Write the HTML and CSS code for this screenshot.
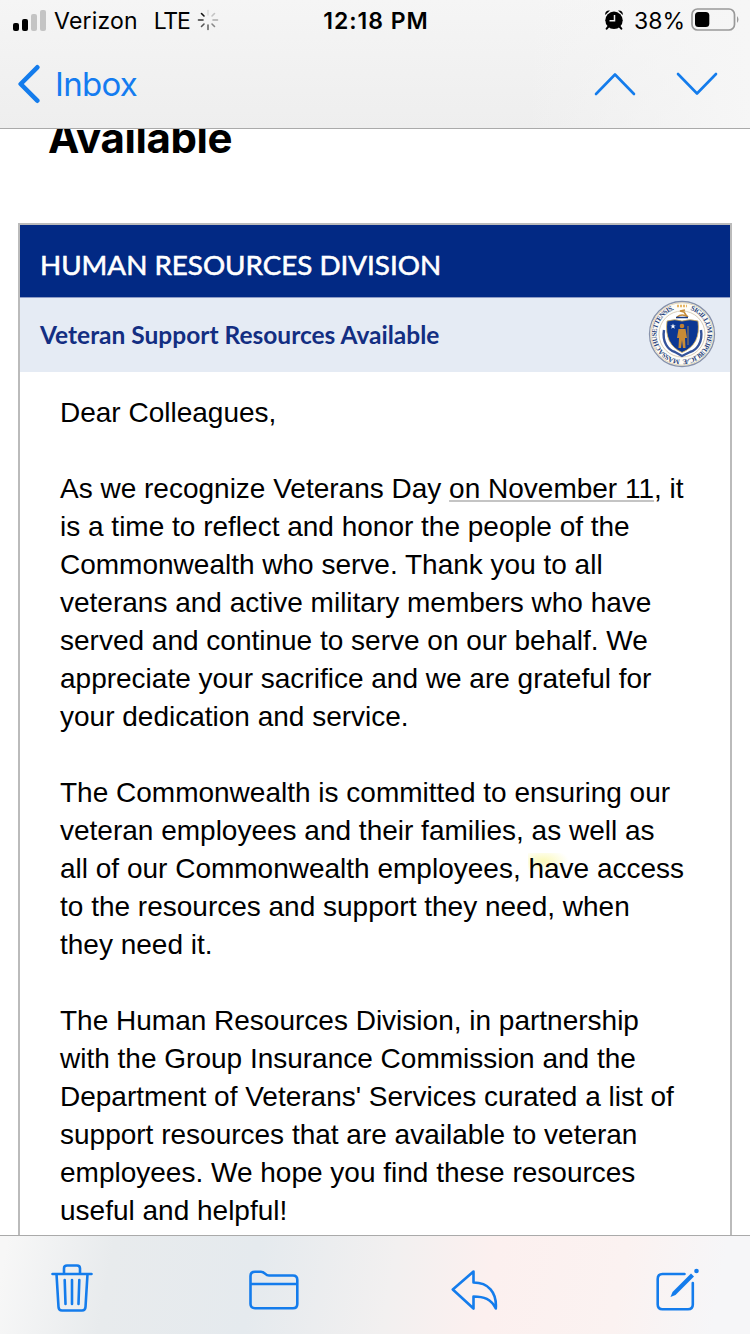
FILE: index.html
```html
<!DOCTYPE html>
<html lang="en">
<head>
<meta charset="utf-8">
<title>Mail</title>
<link rel="stylesheet" href="styles.css">
</head>
<body>
<div class="app">
  <header class="top">
    <div class="status">
      <div class="status-left">
        <svg class="signal" width="34" height="22" viewBox="0 0 34 22">
          <rect x="0" y="14" width="6" height="8" rx="2"/>
          <rect x="9" y="10" width="6" height="12" rx="2"/>
          <rect class="weak" x="18" y="5" width="6" height="17" rx="2"/>
          <rect class="weak" x="27" y="1" width="6" height="21" rx="2"/>
        </svg>
        <span class="carrier">Verizon</span>
        <span class="network">LTE</span>
        <svg class="spinner" width="22" height="22" viewBox="-11 -11 22 22">
          <path d="M-4-4L-6.5-6.5" stroke="#111"/>
          <path d="M-5 0H-9.500" stroke="#333"/>
          <path d="M-4 4L-6.500 6.500" stroke="#555"/>
          <path d="M0 5V9.500" stroke="#666"/>
          <path d="M4 4L6.500 6.500" stroke="#888"/>
          <path d="M5 0H9.500" stroke="#aaa"/>
          <path d="M4-4L6.500-6.500" stroke="#c4c4c4"/>
          <path d="M0-5V-9.500" stroke="#ddd"/>
        </svg>
      </div>
      <div class="clock">12:18 PM</div>
      <div class="status-right">
        <svg class="alarm" width="18" height="20" viewBox="0 0 18 20">
          <circle cx="9" cy="10.300" r="8.700"/>
          <path d="M.2 5C-.2 2 2 0 5 .6ZM17.800 5C18.200 2 16 0 13 .6Z"/>
          <path class="legs" d="M3.500 16.500L1.700 18.700M14.500 16.500L16.300 18.700"/>
          <path class="hands" d="M9.500 5V10.700H4.500"/>
        </svg>
        <span class="percent">38%</span>
        <svg class="battery" width="49" height="24" viewBox="0 0 49 24">
          <rect class="case" x="1" y="1" width="42.500" height="21" rx="5.500"/>
          <rect x="4" y="4" width="14.300" height="15" rx="3.500"/>
          <path class="tip" d="M46 8Q49 11.500 46 15Z"/>
        </svg>
      </div>
    </div>
    <nav class="navbar">
      <a class="back">
        <svg class="icon" width="24" height="40" viewBox="0 0 24 40"><path class="bold" d="M21.300 3.300L4.700 20 21.300 36.700"/></svg>
        <span>Inbox</span>
      </a>
      <div class="arrows">
        <svg class="icon" width="42" height="24" viewBox="0 0 42 24"><path d="M2 22L21 2.500 40 22"/></svg>
        <svg class="icon" width="42" height="24" viewBox="0 0 42 24"><path d="M2 2L21 21.500 40 2"/></svg>
      </div>
    </nav>
  </header>

  <main class="message">
    <h1 class="subject">Available</h1>
    <article class="letter">
      <div class="division">HUMAN RESOURCES DIVISION</div>
      <div class="topic">
        <span>Veteran Support Resources Available</span>
        <svg class="seal" width="68" height="68" viewBox="-34 -34 68 68">
          <defs><path id="ring" d="M0 25.500A25.500 25.500 0 1 1 .01 25.500"/></defs>
          <circle r="32.500" fill="#fdfcf8" stroke="#8792ab" stroke-width="1.300"/>
          <circle r="31.200" fill="none" stroke="#d9cba9" stroke-width=".8"/>
          <circle r="23" fill="#fff" stroke="#d9cfbb" stroke-width="1"/>
          <text class="motto"><textPath href="#ring" startOffset="2" textLength="70">MASSACHUSETTENSIS.</textPath></text>
          <text class="motto" transform="rotate(197)"><textPath href="#ring" startOffset="1" textLength="71">SIGILLUM REIPUBLICÆ</textPath></text>
          <path d="M-5-28H5" stroke="#e7b666" stroke-width="2.500" stroke-dasharray="2 1"/>
          <path d="M-5-17Q0-21 6-17L4-19 2-22-2-23 3-24" fill="none" stroke="#c58b38" stroke-width="1.500"/>
          <path d="M-6-16.500H6" stroke="#173b87" stroke-width="1.500"/>
          <path d="M-18-4C-20 8-14 16-7 18L0 22 8 18C15 16 21 8 19-4" fill="none" stroke="#34539a" stroke-width="2.400"/>
          <path d="M-15-13Q-7-15.500 0-13Q8-15.500 16-13C18 3 13 13 0 18.500C-12 13-17 3-15-13Z" fill="#0b3793" stroke="#d9b35b" stroke-width=".8"/>
          <path d="M-9-10.500L-8.300-8.600H-6.200L-7.900-7.400-7.200-5.300-9-6.600-10.800-5.300-10.100-7.400-11.800-8.600H-9.700Z" fill="#fff"/>
          <circle cx="0" cy="-8" r="2.300" fill="#be8034"/>
          <path d="M-3.500-5L3.500-5 5 4H3L3.500 14H1L0 6-1 14H-3.500L-3 4H-5Z" fill="#c88b36"/>
          <path d="M6-8V11" stroke="#b98a43" stroke-width=".9"/>
        </svg>
      </div>
      <div class="copy">
        <p>Dear Colleagues,</p>
        <p>As we recognize Veterans Day <span class="date">on November 11</span>, it<br>is a time to reflect and honor the people of the<br>Commonwealth who serve. Thank you to all<br>veterans and active military members who have<br>served and continue to serve on our behalf. We<br>appreciate your sacrifice and we are grateful for<br>your dedication and service.</p>
        <p>The Commonwealth is committed to ensuring our<br>veteran employees and their families, as well as<br>all of our Commonwealth employees, <span class="marked">have</span> access<br>to the resources and support they need, when<br>they need it.</p>
        <p>The Human Resources Division, in partnership<br>with the Group Insurance Commission and the<br>Department of Veterans' Services curated a list of<br>support resources that are available to veteran<br>employees. We hope you find these resources<br>useful and helpful!</p>
      </div>
    </article>
  </main>

  <footer class="toolbar">
    <svg class="icon trash" width="42" height="48" viewBox="0 0 42 48">
      <path d="M1.500 10H40.500M13 10V4.500Q13 1.500 16 1.500H26Q29 1.500 29 4.500V10M5.500 10L7.500 43Q7.700 46.500 11 46.500H31Q34.300 46.500 34.500 43L36.500 10M13.700 16L14.500 40M21 16V40M28.300 16L27.500 40"/>
    </svg>
    <svg class="icon folder" width="50" height="40" viewBox="0 0 50 40">
      <path d="M1.500 14V6Q1.500 1.700 6 1.700H12C16 1.700 16 5.500 20 5.500H44Q48.300 5.500 48.300 10V34Q48.300 38.200 44 38.200H6Q1.500 38.200 1.500 34V14H48"/>
    </svg>
    <svg class="icon reply" width="48" height="40" viewBox="0 0 48 40">
      <path d="M22.500 1.500L1.800 19.500 22.500 38.500V26.500C33 26.500 40 29 44.800 38.500C46 22 37 12.500 22.500 12.500Z"/>
    </svg>
    <svg class="icon" width="44" height="44" viewBox="0 0 44 44">
      <path d="M28.500 6H6.500Q1.700 6 1.700 11V36.500Q1.700 41.200 6.500 41.200H32Q36.800 41.200 36.800 36.500V15"/>
      <path class="pen" d="M14.500 29L16.500 24 35 5.500 38 8.500 19.500 27Z"/>
      <circle class="pen" cx="40.500" cy="3" r="2.300"/>
    </svg>
  </footer>
</div>
</body>
</html>
```

FILE: styles.css
```css
* { box-sizing: border-box; }
body { margin: 0; background: #fff; color: #000; }
svg { display: block; flex: none; }

.app {
  display: flex;
  flex-direction: column;
  width: 750px;
  height: 1334px;
  overflow: hidden;
  font-family: Inter, "Liberation Sans", sans-serif;
}

.top {
  flex: none;
  height: 129px;
  border-bottom: 1px solid #aaa;
  background: linear-gradient(90deg, #f6f6f600 70%, #f6f6f6), linear-gradient(#f5f5f5, #eee);
}
.status {
  display: grid;
  grid-template-columns: 1fr auto 1fr;
  height: 40px;
  padding: 1px 10px 0 12px;
  font-size: 23px;
  line-height: 40px;
}
.status-left, .status-right { display: flex; align-items: center; height: 39px; }
.status-right { justify-content: flex-end; }
.signal { margin: -1px 7px 0 1px; }
.weak { fill: #c4c4c4; }
.carrier { letter-spacing: .2px; }
.network { margin-left: 16px; letter-spacing: -1.3px; }
.spinner { margin: -1px 0 0 8px; stroke-width: 1.6; stroke-linecap: round; }
.clock { font-weight: 600; letter-spacing: 1px; }
.alarm { margin: -1px 11px 0 0; }
.legs { stroke: #000; stroke-width: 2; stroke-linecap: round; }
.hands { fill: none; stroke: #eee; stroke-width: 1.5; }
.percent { margin-right: 6px; }
.battery { margin-top: -1px; }
.case { fill: none; stroke: #999; stroke-width: 1.7; }
.tip { fill: #999; }

.navbar {
  display: flex;
  justify-content: space-between;
  align-items: center;
  height: 88px;
  padding: 0 32px 0 16px;
}
.back {
  display: flex;
  align-items: center;
  gap: 15px;
  color: #147cf0;
  font-size: 33px;
  line-height: 40px;
  letter-spacing: -.7px;
}
.arrows { display: flex; gap: 40px; }
.icon {
  fill: none;
  stroke: #147cec;
  stroke-width: 2.6;
  stroke-linecap: round;
  stroke-linejoin: round;
}
.bold { stroke-width: 4.6; }
.pen { fill: #147cec; stroke: none; }

.message {
  flex: 1;
  min-height: 0;
  overflow: hidden;
  padding: 0 18px;
}
.subject {
  margin: -12px 0 0 30px;
  height: 106px;
  font-size: 42px;
  line-height: 42px;
  font-weight: 700;
  letter-spacing: -.4px;
}
.letter {
  height: 1100px;
  border: 2px solid #bbb;
}
.division {
  height: 73px;
  padding: 0 20px;
  border-bottom: 1px solid #8e9bc5;
  background: #022984;
  color: #fff;
  font: 400 27.75px/80px Lato, sans-serif;
  -webkit-text-stroke: .6px #fff;
}
.topic {
  display: flex;
  justify-content: space-between;
  height: 74px;
  padding: 2px 14px 0 20px;
  background: #e5ebf4;
  color: #132e82;
  font: 700 24.5px/69px Lato, sans-serif;
}
.motto { fill: #29447d; font: 700 7px "Liberation Serif", serif; }
.copy {
  padding: 22px 0 0 40px;
  font: 28px/38px "Liberation Sans", Arial, sans-serif;
  white-space: nowrap;
}
.copy p { margin: 0 0 38px; }
.date {
  text-decoration: underline #c4c4c4 2px;
  text-underline-offset: 2px;
  text-decoration-skip-ink: none;
}
.marked { background: radial-gradient(ellipse 26px 12px at 15px 8px, #fbf9b8, #fbf9b800); }

.toolbar {
  flex: none;
  display: flex;
  justify-content: space-between;
  align-items: center;
  height: 99px;
  padding: 9px 50px 0 51px;
  border-top: 1px solid #aaa;
  background: linear-gradient(100deg, #f7f7f7 1%, #e8ebed 15%, #e5eaee 34%, #f2f0f0 52%, #fcf0ef 65%, #fbf2f1 82%, #f6f6f8 95%);
}
.trash { margin-bottom: 3px; }
.folder { margin: 0 -1px 0 1px; }
.reply { margin: 0 2px 0 -2px; }
```
